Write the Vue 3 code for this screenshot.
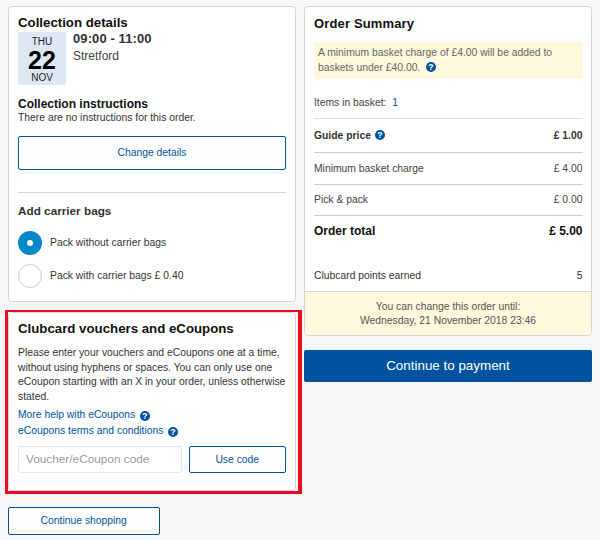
<script setup>
const rows = [
  { label: 'Minimum basket charge', value: '£ 4.00' },
  { label: 'Pick & pack', value: '£ 0.00' }
]
</script>

<template>
  <div class="page">
    <div class="col">
      <section class="card details">
        <h2 class="h1">Collection details</h2>
        <div class="slot">
          <div class="date">
            <span class="dow">THU</span>
            <span class="day">22</span>
            <span class="mon">NOV</span>
          </div>
          <div class="slot-info">
            <div class="time">09:00 - 11:00</div>
            <div class="place">Stretford</div>
          </div>
        </div>
        <h3 class="h1 instr">Collection instructions</h3>
        <p class="none">There are no instructions for this order.</p>
        <button class="btn change">Change details</button>
        <hr class="sep" />
        <h3 class="bags">Add carrier bags</h3>
        <div class="radio-row first">
          <span class="radio on"></span>
          <span>Pack without carrier bags</span>
        </div>
        <div class="radio-row">
          <span class="radio"></span>
          <span>Pack with carrier bags £ 0.40</span>
        </div>
      </section>

      <div class="highlight">
        <section class="card vouchers">
          <h2 class="h1">Clubcard vouchers and eCoupons</h2>
          <p class="intro">Please enter your vouchers and eCoupons one at a time, without using hyphens or spaces. You can only use one eCoupon starting with an X in your order, unless otherwise stated.</p>
          <div class="link">More help with eCoupons
            <svg class="help" viewBox="0 0 16 16"><circle cx="8" cy="8" r="8" /><text x="8" y="13" text-anchor="middle">?</text></svg>
          </div>
          <div class="link second">eCoupons terms and conditions
            <svg class="help" viewBox="0 0 16 16"><circle cx="8" cy="8" r="8" /><text x="8" y="13" text-anchor="middle">?</text></svg>
          </div>
          <div class="code-row">
            <div class="code-input">Voucher/eCoupon code</div>
            <button class="btn use">Use code</button>
          </div>
        </section>
      </div>

      <button class="btn shop">Continue shopping</button>
    </div>

    <div class="col">
      <section class="card summary">
        <div class="sum-body">
          <h2 class="sum-title">Order Summary</h2>
          <div class="notice">A minimum basket charge of £4.00 will be added to baskets under £40.00.
            <svg class="help n" viewBox="0 0 16 16"><circle cx="8" cy="8" r="8" /><text x="8" y="13" text-anchor="middle">?</text></svg>
          </div>
          <div class="items">Items in basket:&nbsp; <span class="count">1</span></div>
          <div class="row guide">
            <span class="guide-label">Guide price
              <svg class="help g" viewBox="0 0 16 16"><circle cx="8" cy="8" r="8" /><text x="8" y="13" text-anchor="middle">?</text></svg>
            </span>
            <b>£ 1.00</b>
          </div>
          <div v-for="r in rows" :key="r.label" class="row">
            <span>{{ r.label }}</span><span>{{ r.value }}</span>
          </div>
          <div class="row total"><span>Order total</span><span>£ 5.00</span></div>
          <div class="points"><span>Clubcard points earned</span><span>5</span></div>
        </div>
        <div class="until">
          <div>You can change this order until:</div>
          <div>Wednesday, 21 November 2018 23:46</div>
        </div>
      </section>
      <button class="pay">Continue to payment</button>
    </div>
  </div>
</template>

<style>
body { background: #f6f6f6; }
</style>

<style scoped>
.page {
  display: flex;
  gap: 8px;
  padding: 6px 8px 0;
  width: 600px;
  height: 540px;
  box-sizing: border-box;
  overflow: hidden;
  font-family: "Liberation Sans", Arial, sans-serif;
  font-size: 10.35px;
  color: #333;
}
.col { width: 288px; flex: none; display: flex; flex-direction: column; align-items: flex-start; }
.card {
  width: 288px;
  box-sizing: border-box;
  background: #fff;
  border: 1px solid #d5d5d5;
  border-radius: 4px;
}
.h1 { margin: 0; font-size: 13.25px; line-height: 16px; font-weight: bold; color: #111; }
.details { height: 295.5px; padding: 8px 9px 0; }
.slot { display: flex; gap: 7px; margin-top: 1px; }
.date {
  width: 48px; height: 52.5px; background: #dee8f5; border-radius: 2px;
  display: flex; flex-direction: column; align-items: center; color: #222;
}
.dow, .mon { font-size: 10px; line-height: 12px; }
.dow { margin-top: 3.5px; }
.day { font-size: 25px; line-height: 24px; font-weight: bold; color: #000; }
.time { font-size: 13px; line-height: 14px; font-weight: bold; color: #333; letter-spacing: 0.1px; }
.place { font-size: 12px; line-height: 14px; margin-top: 3px; color: #444; }
.instr { font-size: 12px; margin-top: 11px; }
.none { margin: 0; font-size: 10.35px; line-height: 12px; color: #333; }
.btn {
  display: block; background: #fff; border: 1px solid #00539f; border-radius: 2px;
  color: #00539f; font-family: inherit; font-size: 10.35px; padding: 0; box-sizing: border-box;
}
.change { width: 268px; height: 34px; margin-top: 12px; }
.sep { border: 0; border-top: 1px solid #d5d5d5; margin: 22px 0 0; }
.bags { margin: 11px 0 0; font-size: 11.75px; line-height: 14px; font-weight: bold; color: #333; }
.radio-row { display: flex; align-items: center; gap: 8px; margin-top: 9px; color: #333; }
.radio-row.first { margin-top: 13px; }
.radio {
  width: 24px; height: 24px; box-sizing: border-box; border: 1px solid #ccc; border-radius: 50%;
  background: #fff; flex: none;
}
.radio.on { border: 9.5px solid #008ac9; }
.highlight {
  margin: 8.5px 0 0 -3px; padding-right: 1px; width: 289px; box-sizing: content-box;
  border-style: solid; border-color: #ee0a1e; border-width: 2px 4px 3px 3px;
}
.vouchers { height: 178.5px; padding: 8px 9px 0; }
.intro { margin: 9px 0 0; font-size: 10.35px; line-height: 14.6px; color: #333; }
.link { margin-top: 4px; line-height: 14px; color: #00539f; display: flex; align-items: center; gap: 5px; }
.link.second { margin-top: 2px; }
.help { width: 10px; height: 10px; flex: none; margin-top: 2px; }
.help circle { fill: #00539f; }
.help text { fill: #fff; font-size: 14px; font-weight: bold; font-family: "Liberation Sans", Arial, sans-serif; }
.code-row { display: flex; gap: 7px; margin-top: 8px; }
.code-input {
  width: 164px; height: 27px; box-sizing: border-box; border: 1px solid #e8e8e8; border-radius: 2px;
  font-size: 11.8px; line-height: 25px; color: #999; padding-left: 7px;
}
.use { width: 96.5px; height: 27px; }
.shop { width: 151.5px; height: 28px; margin-top: 13px; }
.summary { height: 330px; display: flex; flex-direction: column; }
.sum-body { padding: 0 8.5px; flex: 1; }
.sum-title { margin: 9px 0 0 0.5px; font-size: 13px; line-height: 16px; font-weight: bold; color: #111; letter-spacing: 0.15px; }
.notice {
  margin-top: 10px; height: 37px; box-sizing: border-box; padding: 4px 4.5px; background: #fff8dc;
  line-height: 14.6px; color: #666;
}
.help.n { vertical-align: -1px; margin: 0 0 0 3px; }
.items { margin-top: 18px; line-height: 12px; padding: 0 0 9px 0.5px; border-bottom: 1px solid #ddd; color: #444; }
.count { color: #00539f; }
.row {
  display: flex; justify-content: space-between; height: 31.5px; box-sizing: border-box;
  align-items: center; color: #444; border-bottom: 1px solid #ccc; padding: 0 0 0 0.5px;
}
.guide { color: #333; font-weight: bold; height: 34px; }
.guide-label { display: flex; align-items: center; gap: 4px; }
.guide-label .help { margin: 0 0 2px 0; }
.total { border: 0; height: 31px; padding-bottom: 1.5px; font-size: 12px; font-weight: bold; color: #111; }
.points { display: flex; justify-content: space-between; margin-top: 23px; padding-left: 0.5px; line-height: 12px; color: #333; }
.until {
  height: 44px; background: #fff8dc; border-top: 1px solid #d5d5d5; text-align: center;
  line-height: 14.6px; color: #555; padding-top: 7.5px; box-sizing: border-box;
  border-radius: 0 0 3px 3px;
}
.pay {
  width: 288px; height: 32px; margin-top: 14px; background: #00539f; color: #fff; border: 0;
  border-radius: 2px; font-family: inherit; font-size: 13.4px; padding: 0 0 1.5px;
}
</style>
